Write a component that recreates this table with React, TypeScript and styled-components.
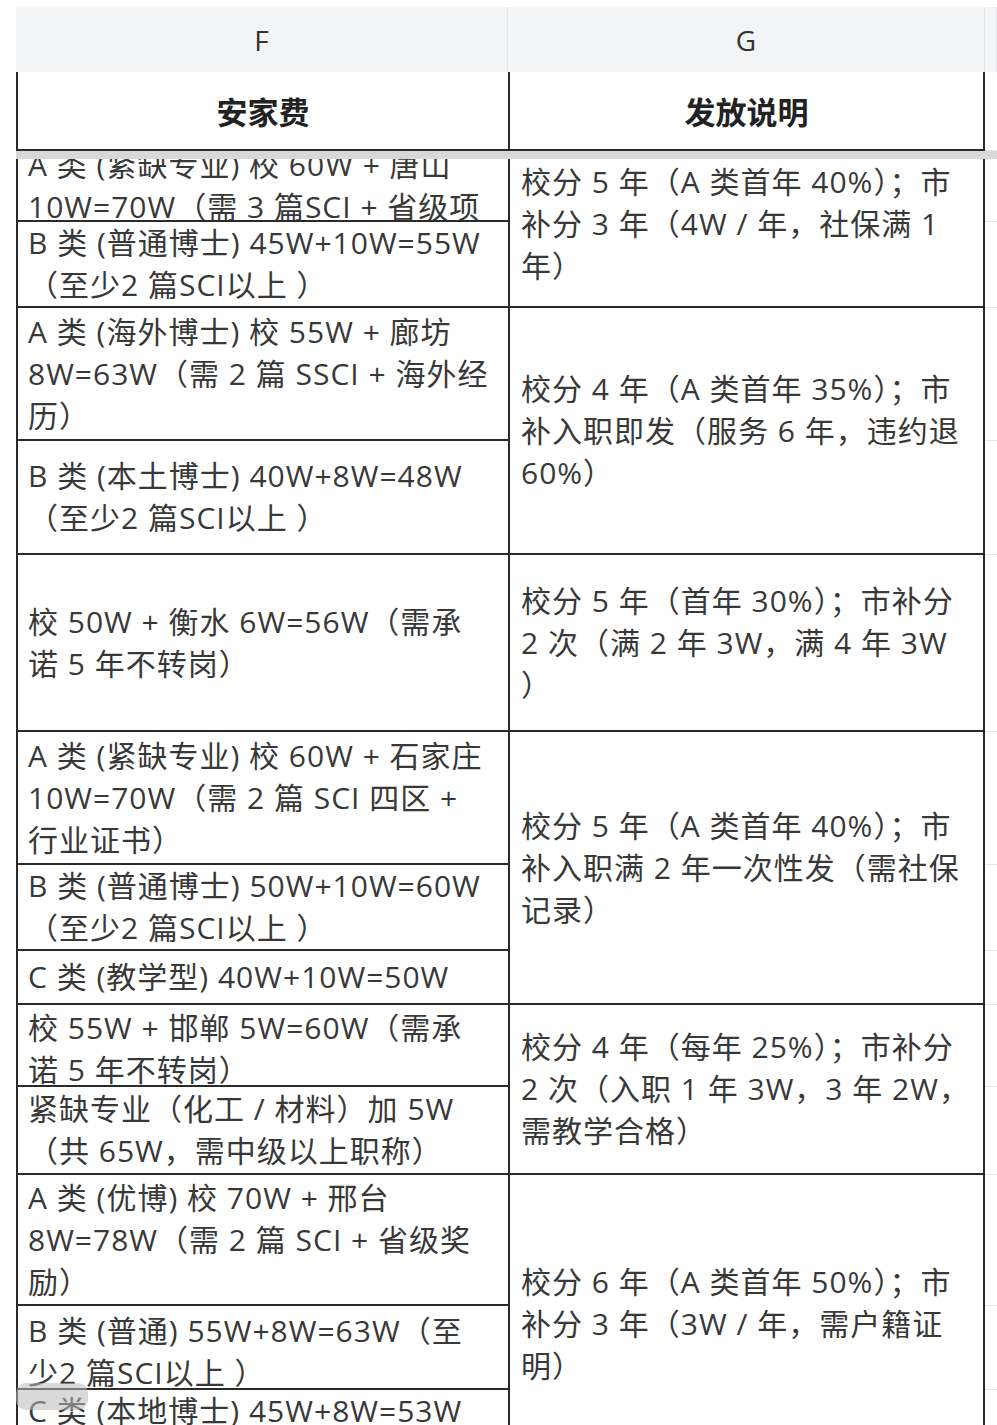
import React from "react";
import styled, { createGlobalStyle } from "styled-components";

const GlobalStyle = createGlobalStyle`
  html, body { margin: 0; padding: 0; background: #ffffff; }
  body { font-family: "Open Sans", "Noto Sans CJK SC", sans-serif; }
  * { box-sizing: border-box; }
`;

const FW = 492;
const GW = 477;
const LINE = "#2a2a2a";

type Sub = { h: number; lines: string[]; top?: boolean; pt?: number };
type Group = { f: Sub[]; g: string[] };

const groups: Group[] = [
  {
    f: [
      { h: 80, top: true, pt: 2, lines: ["A 类 (紧缺专业) 校 60W + 唐山", "10W=70W（需 3 篇SCI + 省级项", "目）"] },
      { h: 86, lines: ["B 类 (普通博士) 45W+10W=55W", "（至少2 篇SCI以上 ）"] },
    ],
    g: ["校分 5 年（A 类首年 40%）；市", "补分 3 年（4W / 年，社保满 1", "年）"],
  },
  {
    f: [
      { h: 133, lines: ["A 类 (海外博士) 校 55W + 廊坊", "8W=63W（需 2 篇 SSCI + 海外经", "历）"] },
      { h: 114, lines: ["B 类 (本土博士) 40W+8W=48W", "（至少2 篇SCI以上 ）"] },
    ],
    g: ["校分 4 年（A 类首年 35%）；市", "补入职即发（服务 6 年，违约退", "60%）"],
  },
  {
    f: [{ h: 177, lines: ["校 50W + 衡水 6W=56W（需承", "诺 5 年不转岗）"] }],
    g: ["校分 5 年（首年 30%）；市补分", "2 次（满 2 年 3W，满 4 年 3W", "）"],
  },
  {
    f: [
      { h: 133, lines: ["A 类 (紧缺专业) 校 60W + 石家庄", "10W=70W（需 2 篇 SCI 四区 +", "行业证书）"] },
      { h: 86, lines: ["B 类 (普通博士) 50W+10W=60W", "（至少2 篇SCI以上 ）"] },
      { h: 54, lines: ["C 类 (教学型) 40W+10W=50W"] },
    ],
    g: ["校分 5 年（A 类首年 40%）；市", "补入职满 2 年一次性发（需社保", "记录）"],
  },
  {
    f: [
      { h: 82, top: true, pt: 2, lines: ["校 55W + 邯郸 5W=60W（需承", "诺 5 年不转岗）"] },
      { h: 88, lines: ["紧缺专业（化工 / 材料）加 5W", "（共 65W，需中级以上职称）"] },
    ],
    g: ["校分 4 年（每年 25%）；市补分", "2 次（入职 1 年 3W，3 年 2W，", "需教学合格）"],
  },
  {
    f: [
      { h: 131, lines: ["A 类 (优博) 校 70W + 邢台", "8W=78W（需 2 篇 SCI + 省级奖", "励）"] },
      { h: 84, top: true, pt: 4, lines: ["B 类 (普通) 55W+8W=63W（至", "少2 篇SCI以上 ）"] },
      { h: 85, lines: ["C 类 (本地博士) 45W+8W=53W", "（无论文数量要求）"] },
    ],
    g: ["校分 6 年（A 类首年 50%）；市", "补分 3 年（3W / 年，需户籍证", "明）"],
  },
];

const Page = styled.div`
  position: relative;
  height: 100vh;
  overflow: hidden;
  padding: 7px 0 0 16px;
  display: flex;
  flex-direction: column;
`;

const LetterRow = styled.div`
  flex: none;
  display: grid;
  grid-template-columns: ${FW}px ${GW}px 1fr;
  height: 65px;
  background: #f3f4f6;
`;

const Letter = styled.div`
  display: flex;
  align-items: center;
  justify-content: center;
  border-right: 1px solid #e2e3e7;
  font-family: "Open Sans", "Liberation Sans", sans-serif;
  font-size: 28px;
  color: #333333;
`;

const HeaderRow = styled.div`
  flex: none;
  display: grid;
  grid-template-columns: ${FW}px ${GW}px 1fr;
  height: 79px;
`;

const HeadCell = styled.div<{ $last?: boolean }>`
  display: flex;
  align-items: center;
  justify-content: center;
  border-left: 2px solid ${LINE};
  border-bottom: 2px solid ${LINE};
  border-right: ${(p) => (p.$last ? `2px solid ${LINE}` : "none")};
  font-family: "Noto Sans CJK SC", sans-serif;
  font-weight: 700;
  font-size: 31px;
  color: #222222;
  background: #ffffff;
`;

const HeadSpare = styled.div`
  border-bottom: 1px solid #e6e6e6;
`;

const Viewport = styled.div`
  position: relative;
  flex: 1;
  overflow: hidden;
`;

const FreezeShadow = styled.div`
  position: absolute;
  top: 0;
  left: 0;
  right: 0;
  height: 8px;
  background: #d8d8d8;
  z-index: 2;
`;

const Body = styled.div`
  margin-top: -9px;
`;

const GroupRow = styled.div`
  display: grid;
  grid-template-columns: ${FW}px ${GW}px 1fr;
`;

const FCol = styled.div`
  display: flex;
  flex-direction: column;
  border-left: 2px solid ${LINE};
`;

const SubCell = styled.div<{ $top?: boolean; $pt?: number }>`
  display: flex;
  align-items: ${(p) => (p.$top ? "flex-start" : "center")};
  padding: ${(p) => p.$pt ?? 0}px 6px 0 10px;
  border-bottom: 2px solid ${LINE};
  overflow: hidden;
  background: #ffffff;
`;

const GCell = styled.div`
  display: flex;
  align-items: center;
  padding: 0 6px 0 11px;
  border-left: 2px solid ${LINE};
  border-right: 2px solid ${LINE};
  border-bottom: 2px solid ${LINE};
  overflow: hidden;
  background: #ffffff;
`;

const HCol = styled.div`
  display: flex;
  flex-direction: column;
`;

const HCell = styled.div`
  border-bottom: 1px solid #e6e6e6;
`;

const Text = styled.div`
  font-size: 30px;
  line-height: 42px;
  letter-spacing: 1px;
  color: #383838;
  white-space: pre;
`;

const ScrollThumb = styled.div`
  position: absolute;
  left: 16px;
  bottom: 15px;
  width: 72px;
  height: 27px;
  border-radius: 10px;
  background: rgba(185, 185, 185, 0.55);
  z-index: 3;
`;

function Lines({ lines }: { lines: string[] }) {
  return (
    <Text>
      {lines.map((l, i) => (
        <div key={i}>{l}</div>
      ))}
    </Text>
  );
}

export default function App() {
  return (
    <>
      <GlobalStyle />
      <Page>
        <LetterRow>
          <Letter>F</Letter>
          <Letter>G</Letter>
          <Letter />
        </LetterRow>
        <HeaderRow>
          <HeadCell>安家费</HeadCell>
          <HeadCell $last>发放说明</HeadCell>
          <HeadSpare />
        </HeaderRow>
        <Viewport>
          <FreezeShadow />
          <Body>
            {groups.map((g, gi) => (
              <GroupRow key={gi}>
                <FCol>
                  {g.f.map((s, si) => (
                    <SubCell key={si} $top={s.top} $pt={s.pt} style={{ height: s.h }}>
                      <Lines lines={s.lines} />
                    </SubCell>
                  ))}
                </FCol>
                <GCell>
                  <Lines lines={g.g} />
                </GCell>
                <HCol>
                  {g.f.map((s, si) => (
                    <HCell key={si} style={{ height: s.h }} />
                  ))}
                </HCol>
              </GroupRow>
            ))}
          </Body>
        </Viewport>
        <ScrollThumb />
      </Page>
    </>
  );
}
